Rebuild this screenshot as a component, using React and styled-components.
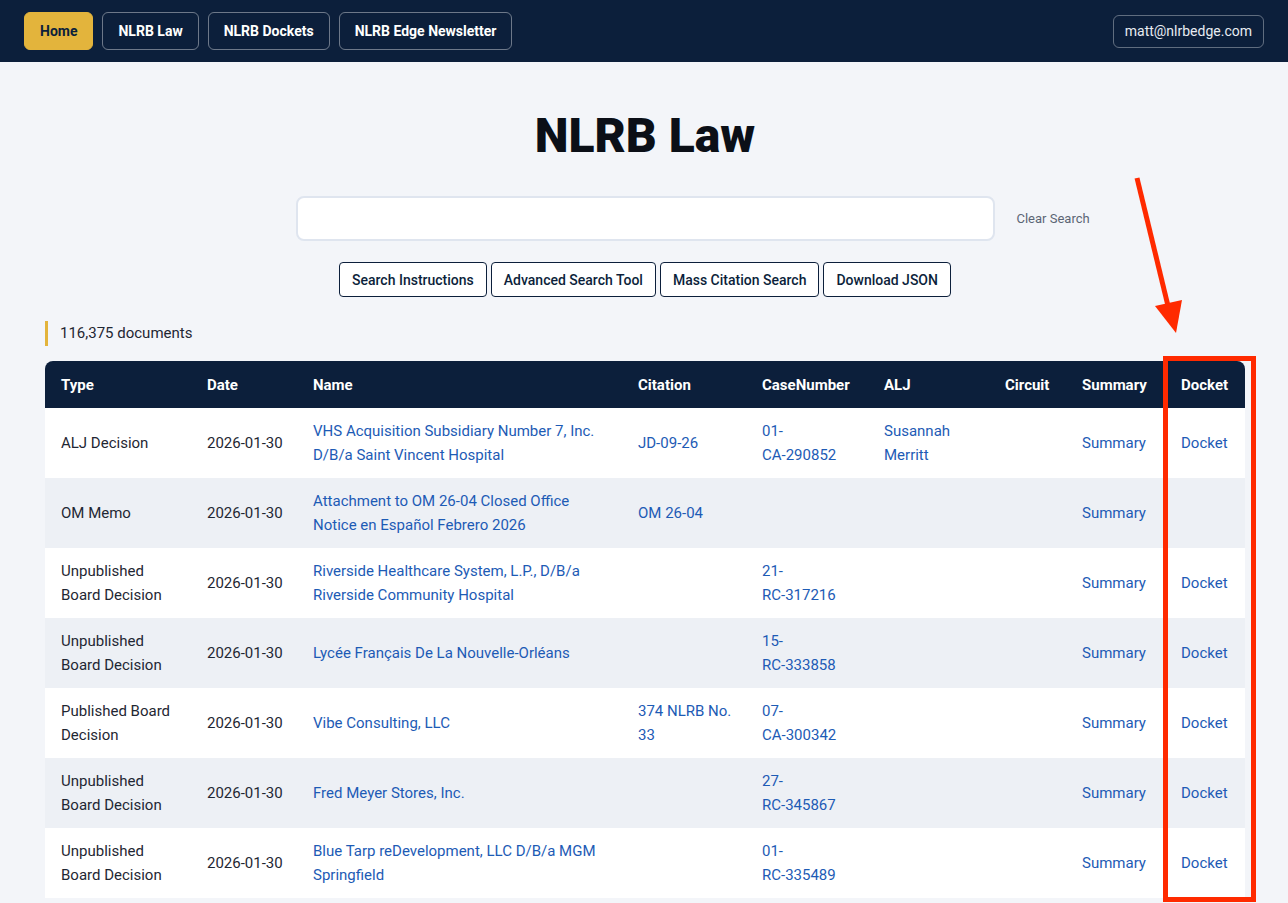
import React from 'react';
import styled, { createGlobalStyle } from 'styled-components';

const GlobalStyle = createGlobalStyle`
  body {
    margin: 0;
    background: #f3f5f9;
    font-family: Roboto, "Noto Sans", sans-serif;
    color: #1f2733;
  }
`;

const NAVY = '#0c1f3b';
const LINK = '#1d5bb5';

const rows = [
  { type: 'ALJ Decision', date: '2026-01-30', name: 'VHS Acquisition Subsidiary Number 7, Inc. D/B/a Saint Vincent Hospital', citation: 'JD-09-26', caseNumber: '01-CA-290852', alj: 'Susannah Merritt', docket: true },
  { type: 'OM Memo', date: '2026-01-30', name: 'Attachment to OM 26-04 Closed Office Notice en Español Febrero 2026', citation: 'OM 26-04', caseNumber: '', alj: '', docket: false },
  { type: 'Unpublished Board Decision', date: '2026-01-30', name: 'Riverside Healthcare System, L.P., D/B/a Riverside Community Hospital', citation: '', caseNumber: '21-RC-317216', alj: '', docket: true },
  { type: 'Unpublished Board Decision', date: '2026-01-30', name: 'Lycée Français De La Nouvelle-Orléans', citation: '', caseNumber: '15-RC-333858', alj: '', docket: true },
  { type: 'Published Board Decision', date: '2026-01-30', name: 'Vibe Consulting, LLC', citation: '374 NLRB No. 33', caseNumber: '07-CA-300342', alj: '', docket: true },
  { type: 'Unpublished Board Decision', date: '2026-01-30', name: 'Fred Meyer Stores, Inc.', citation: '', caseNumber: '27-RC-345867', alj: '', docket: true },
  { type: 'Unpublished Board Decision', date: '2026-01-30', name: 'Blue Tarp reDevelopment, LLC D/B/a MGM Springfield', citation: '', caseNumber: '01-RC-335489', alj: '', docket: true },
];

const columns = [
  { label: 'Type', width: 146 },
  { label: 'Date', width: 106 },
  { label: 'Name', width: 325 },
  { label: 'Citation', width: 124 },
  { label: 'CaseNumber', width: 122 },
  { label: 'ALJ', width: 121 },
  { label: 'Circuit', width: 77 },
  { label: 'Summary', width: 99 },
  { label: 'Docket', width: 80 },
];

// case numbers break after the region prefix only ("01-" / "CA-290852")
const CaseNo = ({ value }) => {
  if (!value) return null;
  const i = value.indexOf('-');
  return (
    <A>
      {value.slice(0, i + 1)}
      <wbr />
      <NoWrap>{value.slice(i + 1)}</NoWrap>
    </A>
  );
};

const App = () => (
  <Page>
    <GlobalStyle />
    <NavBar>
      <NavGroup>
        <NavButton $active>Home</NavButton>
        <NavButton>NLRB Law</NavButton>
        <NavButton>NLRB Dockets</NavButton>
        <NavButton>NLRB Edge Newsletter</NavButton>
      </NavGroup>
      <UserButton>matt@nlrbedge.com</UserButton>
    </NavBar>

    <Main>
      <Title>NLRB Law</Title>

      <SearchRow>
        <SearchInput type="text" />
        <ClearLink>Clear Search</ClearLink>
      </SearchRow>

      <ToolRow>
        <ToolButton>Search Instructions</ToolButton>
        <ToolButton>Advanced Search Tool</ToolButton>
        <ToolButton>Mass Citation Search</ToolButton>
        <ToolButton>Download JSON</ToolButton>
      </ToolRow>

      <Count>116,375 documents</Count>

      <Table>
        <colgroup>
          {columns.map((c) => (
            <col key={c.label} style={{ width: c.width }} />
          ))}
        </colgroup>
        <thead>
          <tr>
            {columns.map((c) => (
              <Th key={c.label}>{c.label}</Th>
            ))}
          </tr>
        </thead>
        <tbody>
          {rows.map((r, i) => (
            <Tr key={i}>
              <Td>{r.type}</Td>
              <Td $nowrap>{r.date}</Td>
              <Td><A>{r.name}</A></Td>
              <Td $tight><A>{r.citation}</A></Td>
              <Td><CaseNo value={r.caseNumber} /></Td>
              <Td><A>{r.alj}</A></Td>
              <Td></Td>
              <Td><A>Summary</A></Td>
              <Td>{r.docket && <A>Docket</A>}</Td>
            </Tr>
          ))}
        </tbody>
      </Table>
    </Main>

    <Annotation viewBox="0 0 1288 903" aria-hidden="true">
      <line x1="1137" y1="178" x2="1169" y2="310" stroke="#ff2a00" strokeWidth="5" />
      <polygon points="1155,306 1182,300 1176,333" fill="#ff2a00" />
      <rect x="1165.5" y="358.5" width="88" height="541" fill="none" stroke="#ff2a00" strokeWidth="5" />
    </Annotation>
  </Page>
);

const Page = styled.div`
  position: relative;
  min-height: 903px;
  overflow: hidden;
`;

const NavBar = styled.nav`
  height: 62px;
  background: ${NAVY};
  display: flex;
  align-items: center;
  justify-content: space-between;
  padding: 0 24px;
  box-sizing: border-box;
`;

const NavGroup = styled.div`
  display: flex;
  gap: 9px;
`;

const NavButton = styled.button`
  height: 38px;
  padding: 0 15px;
  border-radius: 6px;
  font-family: inherit;
  font-size: 14px;
  font-weight: 700;
  cursor: pointer;
  background: ${(p) => (p.$active ? '#e3b43c' : 'transparent')};
  color: ${(p) => (p.$active ? NAVY : '#ffffff')};
  border: 1px solid ${(p) => (p.$active ? '#e3b43c' : 'rgba(255,255,255,0.4)')};
`;

const UserButton = styled.button`
  height: 33px;
  padding: 0 11px;
  border-radius: 6px;
  background: transparent;
  border: 1px solid rgba(255,255,255,0.35);
  color: #e8ecf2;
  font-family: inherit;
  font-size: 14px;
`;

const Main = styled.main`
  padding: 0 43px 0 45px;
  display: flex;
  flex-direction: column;
`;

const Title = styled.h1`
  margin: 47px 0 0;
  text-align: center;
  font-size: 48px;
  line-height: 54px;
  font-weight: 900;
  color: #0b0f17;
`;

const SearchRow = styled.div`
  margin-top: 33px;
  display: flex;
  align-items: center;
  justify-content: center;
  gap: 22px;
  padding-left: 125px;
`;

const SearchInput = styled.input`
  width: 699px;
  height: 45px;
  box-sizing: border-box;
  border: 2px solid #dfe5ef;
  border-radius: 8px;
  background: #fff;
  outline: none;
`;

const ClearLink = styled.span`
  font-size: 13px;
  color: #5b6575;
  width: 103px;
`;

const ToolRow = styled.div`
  margin-top: 21px;
  display: flex;
  justify-content: center;
  gap: 4px;
`;

const ToolButton = styled.button`
  height: 35px;
  padding: 0 12px;
  background: #fff;
  border: 1px solid ${NAVY};
  border-radius: 4px;
  color: ${NAVY};
  font-family: inherit;
  font-size: 14px;
  font-weight: 500;
`;

const Count = styled.div`
  margin-top: 24px;
  border-left: 3px solid #e3b43c;
  padding-left: 12px;
  height: 25px;
  line-height: 25px;
  font-size: 15px;
  color: #1f2733;
`;

const Table = styled.table`
  margin-top: 15px;
  width: 1200px;
  table-layout: fixed;
  border-collapse: separate;
  border-spacing: 0;
  font-size: 15px;
  line-height: 24px;
`;

const Th = styled.th`
  background: ${NAVY};
  color: #fff;
  text-align: left;
  font-weight: 700;
  height: 47px;
  padding: 0 16px;
  font-size: 15px;
  &:first-child { border-top-left-radius: 8px; }
  &:last-child { border-top-right-radius: 8px; }
`;

const Tr = styled.tr`
  background: #fff;
  &:nth-child(even) { background: #edf0f5; }
`;

const Td = styled.td`
  height: 70px;
  box-sizing: border-box;
  padding: 0 ${(p) => (p.$tight ? '8px' : '16px')} 0 16px;
  vertical-align: middle;
  color: #1f2733;
  white-space: ${(p) => (p.$nowrap ? 'nowrap' : 'normal')};
`;

const A = styled.a`
  color: ${LINK};
  text-decoration: none;
  cursor: pointer;
`;

const NoWrap = styled.span`
  white-space: nowrap;
`;

const Annotation = styled.svg`
  position: absolute;
  left: 0;
  top: 0;
  width: 1288px;
  height: 903px;
  pointer-events: none;
`;

export default App;
